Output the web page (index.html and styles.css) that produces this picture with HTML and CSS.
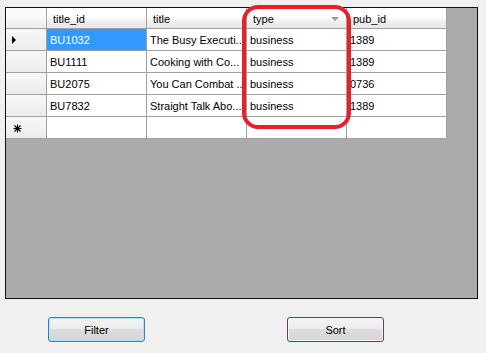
FILE: index.html
```html
<!DOCTYPE html>
<html>
<head>
<meta charset="utf-8">
<link rel="stylesheet" href="styles.css">
</head>
<body>
<div class="grid">
  <div class="table">
    <div class="row head">
      <div class="rh corner"></div>
      <div class="ch">title_id</div>
      <div class="ch">title</div>
      <div class="ch sorted">type<span class="sort"></span></div>
      <div class="ch">pub_id</div>
    </div>
    <div class="row">
      <div class="rh"><span class="cur"></span></div>
      <div class="cell sel">BU1032</div>
      <div class="cell">The Busy Executi...</div>
      <div class="cell">business</div>
      <div class="cell">1389</div>
    </div>
    <div class="row">
      <div class="rh"></div>
      <div class="cell">BU1111</div>
      <div class="cell">Cooking with Co...</div>
      <div class="cell">business</div>
      <div class="cell">1389</div>
    </div>
    <div class="row">
      <div class="rh"></div>
      <div class="cell">BU2075</div>
      <div class="cell">You Can Combat ...</div>
      <div class="cell">business</div>
      <div class="cell">0736</div>
    </div>
    <div class="row">
      <div class="rh"></div>
      <div class="cell">BU7832</div>
      <div class="cell">Straight Talk Abo...</div>
      <div class="cell">business</div>
      <div class="cell">1389</div>
    </div>
    <div class="row">
      <div class="rh"><svg class="star" width="9" height="9" viewBox="0 0 9 9"><path d="M4.5 0.5V8.5M0.5 4.5H8.5M1.5 1.5L7.5 7.5M7.5 1.5L1.5 7.5" stroke="#000" stroke-width="1.1" fill="none"/></svg></div>
      <div class="cell"></div>
      <div class="cell"></div>
      <div class="cell"></div>
      <div class="cell"></div>
    </div>
  </div>
  <div class="highlight"></div>
</div>
<div class="buttons">
  <button class="btn focus">Filter</button>
  <button class="btn hover">Sort</button>
</div>
</body>
</html>
```
FILE: styles.css
```css
html, body {
  margin: 0;
  padding: 0;
  background: #f0f0f0;
  font-family: "Liberation Sans", Arial, sans-serif;
  font-size: 11px;
  color: #000;
}
.grid {
  position: relative;
  margin: 7px 0 0 5px;
  width: 471px;
  height: 290px;
  border: 1px solid #101010;
  background: #ababab;
}
.table {
  width: 441px;
}
.row {
  display: grid;
  grid-template-columns: 41px 100px 100px 100px 100px;
  height: 22px;
}
.row.head {
  height: 21px;
}
.row > div {
  box-sizing: border-box;
  border-right: 1px solid #a0a0a0;
  border-bottom: 1px solid #a0a0a0;
  background: #fff;
  display: flex;
  align-items: center;
  white-space: nowrap;
  overflow: hidden;
  position: relative;
}
.rh {
  background: linear-gradient(#f7f7f7, #ececec) !important;
  justify-content: center;
}
.corner {
  background: linear-gradient(#fafafa 40%, #ececec) !important;
}
.ch {
  background: linear-gradient(#ffffff 45%, #f3f3f3 60%, #e6e6e6) !important;
  padding-left: 6px;
  padding-top: 1px;
}
.cell {
  padding-left: 3px;
  padding-top: 1px;
}
.cell.sel {
  background: #3399ff !important;
  color: #fff;
}
.sort {
  position: absolute;
  right: 7px;
  top: 9px;
  width: 0;
  height: 0;
  border-left: 4px solid transparent;
  border-right: 4px solid transparent;
  border-top: 4px solid #9a9a9a;
}
.cur {
  width: 0;
  height: 0;
  border-top: 4px solid transparent;
  border-bottom: 4px solid transparent;
  border-left: 4px solid #000;
  margin-left: -24px;
}
.star {
  margin-left: -18px;
  margin-top: 1px;
}
.highlight {
  position: absolute;
  left: 236px;
  top: -3px;
  width: 101px;
  height: 116px;
  border: 4px solid #e8202c;
  border-radius: 16px;
}
.buttons {
  display: flex;
  padding: 18px 0 0 48px;
  gap: 142px;
}
.btn {
  width: 97px;
  height: 25px;
  box-sizing: border-box;
  font-family: "Liberation Sans", Arial, sans-serif;
  font-size: 11px;
  color: #000;
  background: linear-gradient(#f4f4f4 0%, #ececec 45%, #dddddd 50%, #d6d6d6 100%);
  border-radius: 3px;
  padding: 0;
}
.btn.focus {
  border: 1px solid #3c7fb1;
  box-shadow: inset 0 0 0 1px #aee0f8;
}
.btn.hover {
  border: 1px solid #6e3b5c;
  box-shadow: inset 0 0 0 1px #f8f8f8;
}
```
